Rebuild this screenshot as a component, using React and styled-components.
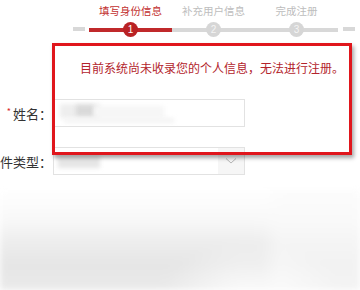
import React from 'react'
import styled, { createGlobalStyle } from 'styled-components'

const GlobalStyle = createGlobalStyle`
    html, body {
        margin:0;
        padding:0;
        background:#fff;
        overflow:hidden;
    }
    body {
        font-family:"Noto Sans CJK SC", "Noto Sans", sans-serif;
    }
`;

const Page = styled.div`
    position:relative;
    width:360px;
    height:290px;
    overflow:hidden;
    background:#fff;
`;

const Stepper = styled.div`
    display:flex;
    align-items:flex-end;
    padding-left:73px;
    height:37px;
`;

const Dash = styled.div`
    width:12px;
    height:4px;
    background:#d8d8d8;
    margin-bottom:6px;
    margin-right:${(props) => props.$right || 0}px;
    margin-left:${(props) => props.$left || 0}px;
`;

const Step = styled.div`
    width:83px;
    display:flex;
    flex-direction:column;
    align-items:center;
`;

const StepLabel = styled.div`
    font-size:10.5px;
    line-height:14px;
    height:14px;
    color:${(props) => (props.$active ? '#c2302f' : '#bdbdbd')};
    margin-bottom:4px;
    white-space:nowrap;
`;

const Track = styled.div`
    position:relative;
    width:100%;
    height:15px;
    display:flex;
    align-items:center;
    justify-content:center;
    &::before{
        content:"";
        position:absolute;
        left:0;
        right:0;
        top:6px;
        height:4px;
        background:${(props) => (props.$active ? '#c0292b' : '#d8d8d8')};
    }
`;

const Bubble = styled.div`
    position:relative;
    width:15px;
    height:15px;
    border-radius:50%;
    background:${(props) => (props.$active ? '#b92225' : '#d6d6d6')};
    color:${(props) => (props.$active ? '#fff' : '#f4f4f4')};
    font-family:"Liberation Sans", Arial, sans-serif;
    font-size:10px;
    line-height:15px;
    text-align:center;
`;

const Form = styled.div`
    display:flex;
    flex-direction:column;
    gap:20px;
    padding-top:62px;
`;

const Row = styled.div`
    display:flex;
    align-items:center;
`;

const Label = styled.div`
    width:52px;
    flex-shrink:0;
    display:flex;
    justify-content:flex-end;
    align-items:center;
    font-size:13px;
    color:#333;
    white-space:nowrap;
`;

const Star = styled.span`
    color:#d9262b;
    font-size:9px;
    margin-right:2px;
    position:relative;
    top:-2px;
`;

const Field = styled.div`
    position:relative;
    margin-left:1px;
    width:192px;
    height:28px;
    box-sizing:border-box;
    border:1px solid #e2e2e2;
    background:#fff;
    display:flex;
    align-items:center;
    overflow:hidden;
`;

const Blur = styled.div`
    position:absolute;
    left:${(props) => props.$x}px;
    top:${(props) => props.$y}px;
    width:${(props) => props.$w}px;
    height:${(props) => props.$h}px;
    background:${(props) => props.$c};
    filter:blur(2px);
`;

const Arrow = styled.div`
    margin-left:auto;
    width:26px;
    height:100%;
    background:#f6f6f6;
    display:flex;
    align-items:center;
    justify-content:center;
`;

const Haze = styled.div`
    position:absolute;
    left:0;
    right:0;
    top:190px;
    bottom:0;
    background:
        radial-gradient(ellipse 90px 60px at 250px 110px, rgba(255,255,255,0.9), rgba(255,255,255,0)),
        linear-gradient(to right, rgba(255,255,255,0) 0, rgba(255,255,255,0) 260px, rgba(250,250,250,0.6) 280px, rgba(250,250,250,0.6) 360px),
        linear-gradient(to bottom, #fff 0, #f8f8f8 30px, #ececec 55px, #e6e6e6 75px, #eaeaea 100px);
    filter:blur(3px);
`;

const Notice = styled.div`
    position:absolute;
    left:52px;
    top:43px;
    width:300px;
    height:112px;
    box-sizing:border-box;
    border:3px solid #e0161c;
    box-shadow:2px 3px 4px rgba(0,0,0,0.35);
    padding:14px 0 0 25px;
`;

const NoticeText = styled.div`
    font-size:12px;
    line-height:16px;
    color:#b3242c;
    white-space:nowrap;
`;

const steps = [
    { label: '填写身份信息', n: 1, active: true },
    { label: '补充用户信息', n: 2 },
    { label: '完成注册', n: 3 },
]

export default function App() {
  return (
    <Page>
        <GlobalStyle />
        <Stepper>
            <Dash $right={4} />
            {steps.map((s) => (
                <Step key={s.n}>
                    <StepLabel $active={s.active}>{s.label}</StepLabel>
                    <Track $active={s.active}>
                        <Bubble $active={s.active}>{s.n}</Bubble>
                    </Track>
                </Step>
            ))}
            <Dash $left={5} />
        </Stepper>

        <Haze />

        <Form>
            <Row>
                <Label><Star>*</Star>姓名：</Label>
                <Field>
                    <Blur $x={6} $y={4} $w={40} $h={14} $c="#eeeeee" />
                    <Blur $x={22} $y={5} $w={18} $h={11} $c="#d9d9d9" />
                    <Blur $x={40} $y={6} $w={70} $h={12} $c="#f6f6f6" />
                    <Blur $x={10} $y={18} $w={110} $h={5} $c="#f3f3f3" />
                </Field>
            </Row>
            <Row>
                <Label>证件类型：</Label>
                <Field>
                    <Blur $x={4} $y={8} $w={42} $h={12} $c="#e6e6e6" />
                    <Arrow>
                        <svg width="12" height="8" viewBox="0 0 12 8">
                            <path d="M1 1.5 L6 6 L11 1.5" fill="none" stroke="#b5b5b5" strokeWidth="1" />
                        </svg>
                    </Arrow>
                </Field>
            </Row>
        </Form>

        <Notice>
            <NoticeText>目前系统尚未收录您的个人信息，无法进行注册。</NoticeText>
        </Notice>
    </Page>
  )
}
